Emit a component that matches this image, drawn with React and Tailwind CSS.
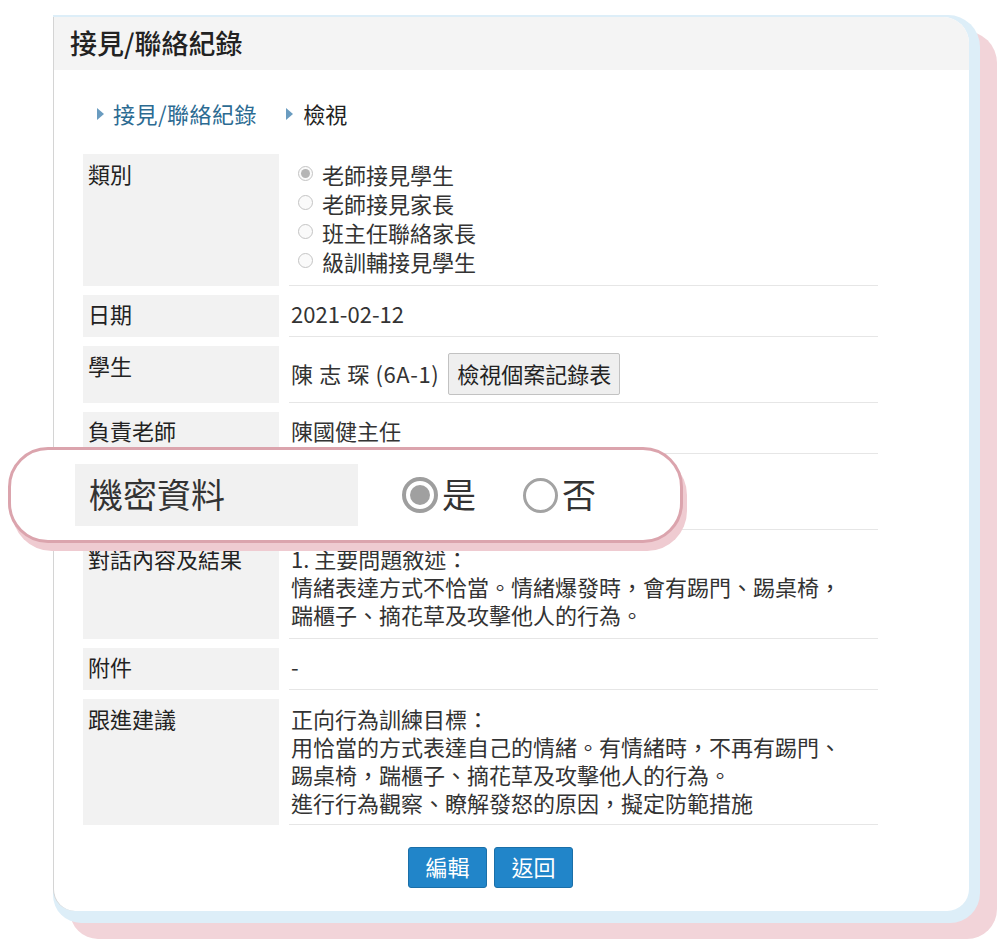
import React from "react";

const font = { fontFamily: '"Noto Sans CJK TC", "Noto Sans", sans-serif' };

const labelCls =
  "w-[196px] shrink-0 bg-[#f2f2f2] px-[5px] text-[22px] leading-[28px] text-[#222]";
const valueCls = "flex-1 border-b border-[#e6e6e6] text-[22px] leading-[28px] text-[#333]";

const Row = ({ label, children, labelPad = "pt-[4px] pb-[9px]", valuePad = "pt-[4px] pb-[9px] pl-[2px]" }) => (
  <div className="flex gap-[10px]">
    <div className={`${labelCls} ${labelPad}`}>{label}</div>
    <div className={`${valueCls} ${valuePad}`}>{children}</div>
  </div>
);

const SmallRadio = ({ checked }) => (
  <span className="ml-[9px] mr-[9px] inline-flex h-[15px] w-[15px] shrink-0 items-center justify-center rounded-full border border-[#c4c4c4] bg-[#fafafa]">
    {checked && <span className="h-[9px] w-[9px] rounded-full bg-[#b5b5b5]" />}
  </span>
);

const Arrow = () => (
  <svg width="7" height="12" viewBox="0 0 7 12" className="shrink-0">
    <path d="M0 0 L7 6 L0 12 Z" fill="#6a9cc0" />
  </svg>
);

const categories = ["老師接見學生", "老師接見家長", "班主任聯絡家長", "級訓輔接見學生"];

export default function App() {
  return (
    <div className="relative h-[942px] w-[1000px] overflow-hidden bg-white" style={font}>
      {/* 卡片 */}
      <div className="ml-[53px] mt-[15px] w-[927px] rounded-tr-[32px] rounded-br-[30px] rounded-bl-[28px] bg-[#ddeef8] pt-[2px] pr-[11px] pb-[12px] shadow-[17px_16px_0_#f2d4d9]">
        <div className="overflow-hidden rounded-tr-[26px] rounded-br-[22px] rounded-bl-[22px] border-l border-[#d4d4d4] bg-white">
          {/* HEADER */}
          <div className="flex h-[53px] items-center bg-[#f4f4f4] pl-[16px] text-[27px] font-medium text-[#222]">
            接見/聯絡紀錄
          </div>

          {/* 麵包屑 */}
          <div className="flex items-center pl-[43px] pt-[29px] text-[22px] leading-[29px]">
            <Arrow />
            <span className="ml-[9px] tracking-[0.5px] text-[#2c6b92]">接見/聯絡紀錄</span>
            <span className="ml-[29px]"><Arrow /></span>
            <span className="ml-[10px] text-[#222]">檢視</span>
          </div>

          {/* 表格 */}
          <div className="mt-[26px] flex w-[824px] flex-col gap-[9px] pl-[29px]">
            <Row label="類別" labelPad="pt-[5px] pb-[9px]" valuePad="pt-[5px] pb-[10px]">
              {categories.map((c, i) => (
                <div key={c} className="flex h-[29px] items-center">
                  <SmallRadio checked={i === 0} />
                  <span>{c}</span>
                </div>
              ))}
            </Row>
            <Row label="日期">2021-02-12</Row>
            <Row label="學生" labelPad="pt-[5px]" valuePad="py-[7px] pl-[2px] flex items-center">
              <span className="-mt-[2px] tracking-[0.6px]">陳 志 琛 (6A-1)</span>
              <button className="ml-[9px] h-[42px] rounded-[2px] border border-[#c2c2c2] bg-[#efefef] px-[8px] pb-[2px] text-[22px] text-[#222]">
                檢視個案記錄表
              </button>
            </Row>
            <Row label="負責老師">陳國健主任</Row>
            <Row label="機密資料" valuePad="h-[67px] pl-[2px]">
              <span />
            </Row>
            <Row label="對話內容及結果" labelPad="pt-[5px] pb-[10px]" valuePad="pt-[5px] pb-[10px] pl-[2px]">
              <div>1. 主要問題敘述：</div>
              <div>情緒表達方式不恰當。情緒爆發時，會有踢門、踢桌椅，</div>
              <div>踹櫃子、摘花草及攻擊他人的行為。</div>
            </Row>
            <Row label="附件">-</Row>
            <Row label="跟進建議" labelPad="pt-[5px] pb-[8px]" valuePad="pt-[5px] pb-[8px] pl-[2px]">
              <div>正向行為訓練目標：</div>
              <div>用恰當的方式表達自己的情緒。有情緒時，不再有踢門、</div>
              <div>踢桌椅，踹櫃子、摘花草及攻擊他人的行為。</div>
              <div>進行行為觀察、瞭解發怒的原因，擬定防範措施</div>
            </Row>
          </div>

          {/* 按鈕 */}
          <div className="flex gap-[7px] pb-[23px] pl-[354px] pt-[22px]">
            <button className="h-[41px] w-[79px] rounded-[3px] border border-[#1b6fa8] bg-[#2185c9] pb-[2px] text-[22px] text-white">
              編輯
            </button>
            <button className="h-[41px] w-[79px] rounded-[3px] border border-[#1b6fa8] bg-[#2185c9] pb-[2px] text-[22px] text-white">
              返回
            </button>
          </div>
        </div>
      </div>

      {/* 放大提示框 */}
      <div className="absolute left-[8px] top-[447px] flex h-[96px] w-[675px] items-center rounded-[40px] border-[3px] border-[#dba4ad] bg-white pl-[64px] shadow-[4px_8px_0_#efcbd1]">
        <div className="flex h-[62px] w-[283px] items-center bg-[#f1f1f1] pb-[3px] pl-[14px] text-[34px] text-[#333]">
          機密資料
        </div>
        <div className="ml-[44px] flex items-center text-[34px] text-[#333]">
          <span className="flex h-[36px] w-[36px] items-center justify-center rounded-full border-[4px] border-[#9e9e9e]">
            <span className="h-[20px] w-[20px] rounded-full bg-[#a0a0a0]" />
          </span>
          <span className="ml-[4px] pb-[3px]">是</span>
          <span className="ml-[47px] h-[35px] w-[35px] rounded-full border-[3px] border-[#a3a3a3]" />
          <span className="ml-[4px] pb-[3px]">否</span>
        </div>
      </div>
    </div>
  );
}
